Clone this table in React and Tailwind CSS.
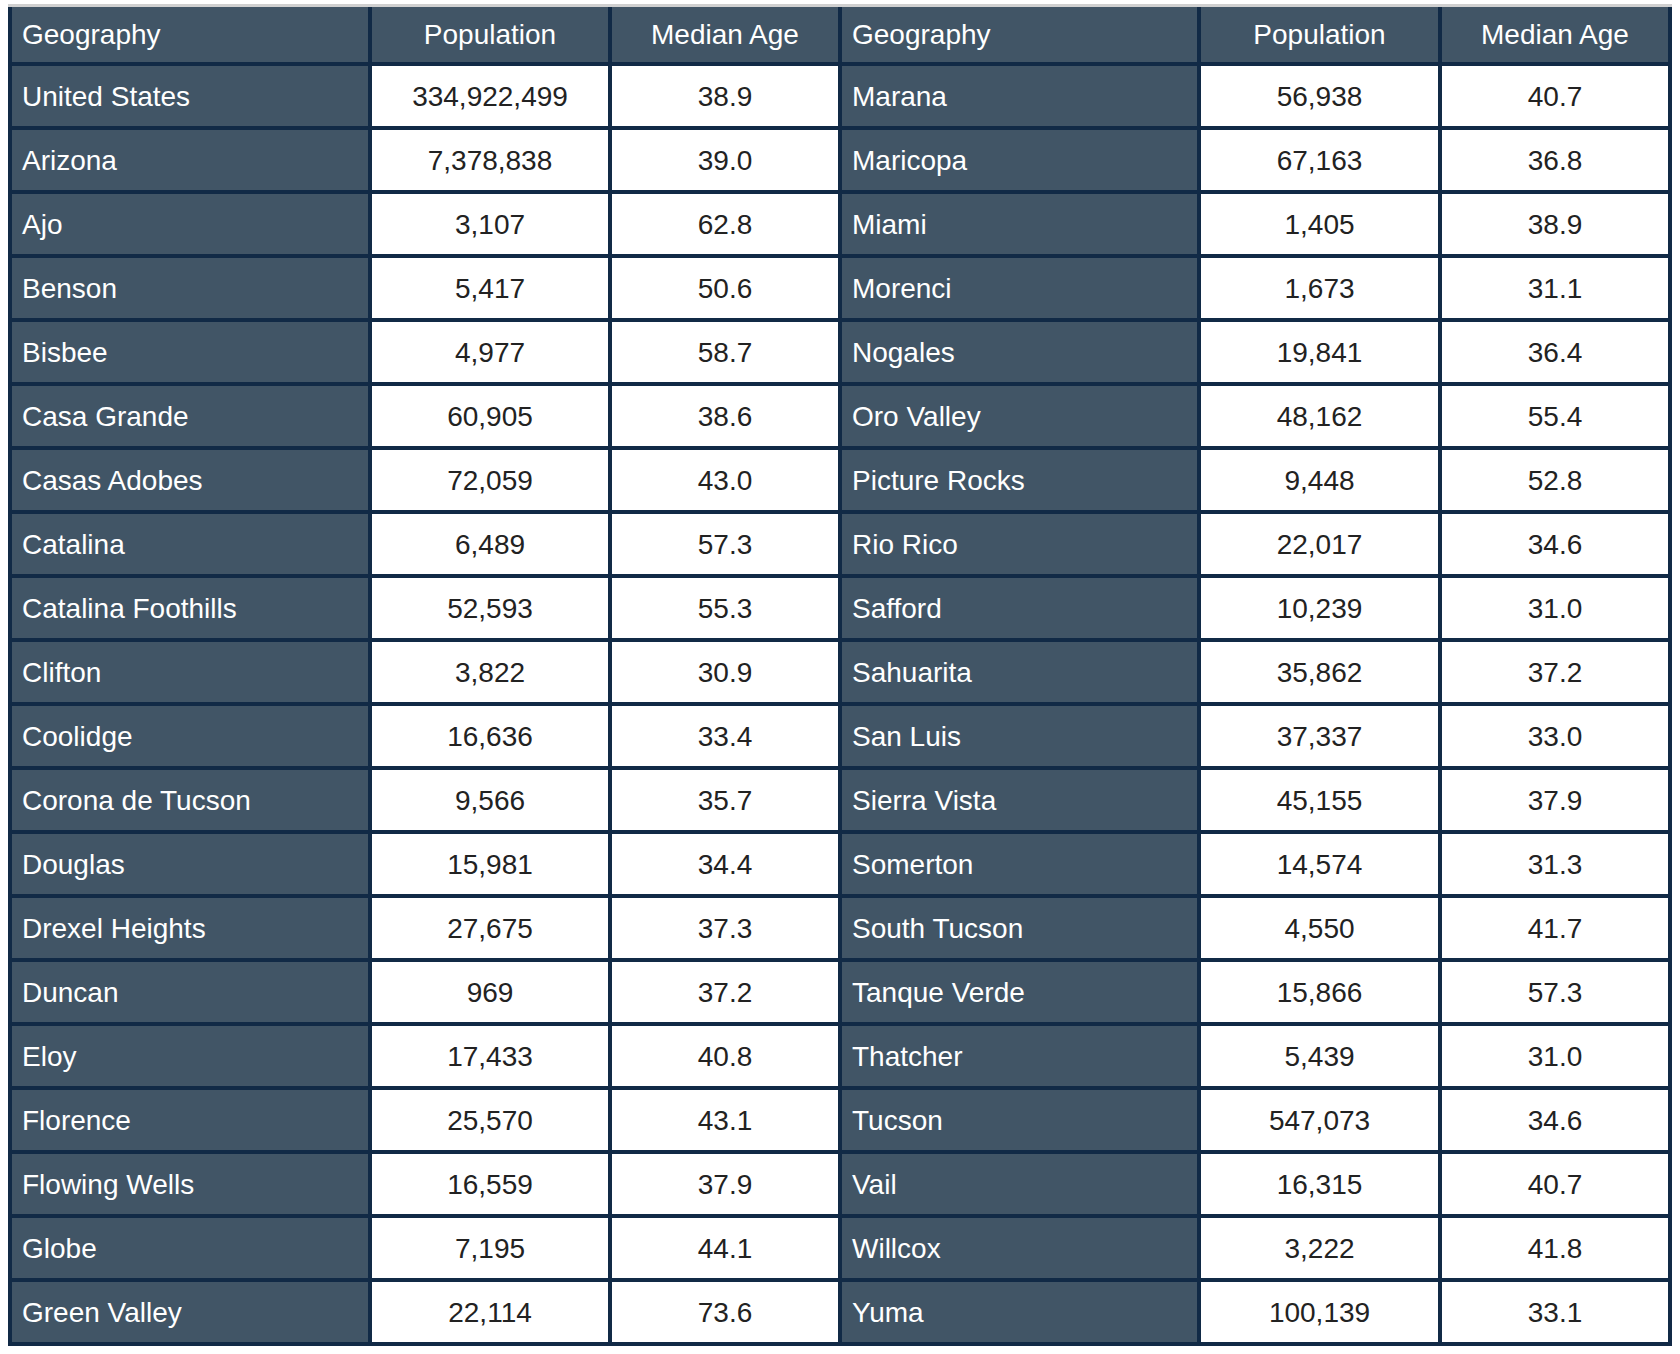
import React from "react";

const left = [
  ["United States", "334,922,499", "38.9"],
  ["Arizona", "7,378,838", "39.0"],
  ["Ajo", "3,107", "62.8"],
  ["Benson", "5,417", "50.6"],
  ["Bisbee", "4,977", "58.7"],
  ["Casa Grande", "60,905", "38.6"],
  ["Casas Adobes", "72,059", "43.0"],
  ["Catalina", "6,489", "57.3"],
  ["Catalina Foothills", "52,593", "55.3"],
  ["Clifton", "3,822", "30.9"],
  ["Coolidge", "16,636", "33.4"],
  ["Corona de Tucson", "9,566", "35.7"],
  ["Douglas", "15,981", "34.4"],
  ["Drexel Heights", "27,675", "37.3"],
  ["Duncan", "969", "37.2"],
  ["Eloy", "17,433", "40.8"],
  ["Florence", "25,570", "43.1"],
  ["Flowing Wells", "16,559", "37.9"],
  ["Globe", "7,195", "44.1"],
  ["Green Valley", "22,114", "73.6"],
];

const right = [
  ["Marana", "56,938", "40.7"],
  ["Maricopa", "67,163", "36.8"],
  ["Miami", "1,405", "38.9"],
  ["Morenci", "1,673", "31.1"],
  ["Nogales", "19,841", "36.4"],
  ["Oro Valley", "48,162", "55.4"],
  ["Picture Rocks", "9,448", "52.8"],
  ["Rio Rico", "22,017", "34.6"],
  ["Safford", "10,239", "31.0"],
  ["Sahuarita", "35,862", "37.2"],
  ["San Luis", "37,337", "33.0"],
  ["Sierra Vista", "45,155", "37.9"],
  ["Somerton", "14,574", "31.3"],
  ["South Tucson", "4,550", "41.7"],
  ["Tanque Verde", "15,866", "57.3"],
  ["Thatcher", "5,439", "31.0"],
  ["Tucson", "547,073", "34.6"],
  ["Vail", "16,315", "40.7"],
  ["Willcox", "3,222", "41.8"],
  ["Yuma", "100,139", "33.1"],
];

function HeadLeft({ children }) {
  return (
    <div className="bg-[#415566] text-white h-[55px] flex items-center pl-[10px] pt-[1px]">{children}</div>
  );
}
function HeadCenter({ children }) {
  return (
    <div className="bg-[#415566] text-white h-[55px] flex items-center justify-center pt-[1px]">{children}</div>
  );
}
function Geo({ children }) {
  return (
    <div className="bg-[#415566] text-white h-[60px] flex items-center pl-[10px] pt-[2px] whitespace-nowrap">{children}</div>
  );
}
function Num({ children }) {
  return (
    <div className="bg-white text-[#222222] h-[60px] flex items-center justify-center pt-[2px]">{children}</div>
  );
}

export default function App() {
  const rows = left.map((l, i) => [l, right[i]]);
  return (
    <div className="bg-white min-h-[1354px] pt-[4px] pl-[8px]" style={{ fontFamily: '"Liberation Sans", Arial, sans-serif' }}>
      <div className="w-[1664px] h-[3px] bg-[#d0d0d0]" />
      <div className="w-[1664px] bg-[#112a46] px-[4px] pb-[4px] grid grid-cols-[356px_236px_226px_355px_237px_226px] gap-[4px] text-[28px] leading-none">
        <HeadLeft>Geography</HeadLeft>
        <HeadCenter>Population</HeadCenter>
        <HeadCenter>Median Age</HeadCenter>
        <HeadLeft>Geography</HeadLeft>
        <HeadCenter>Population</HeadCenter>
        <HeadCenter>Median Age</HeadCenter>
        {rows.map(([l, r], i) => (
          <React.Fragment key={i}>
            <Geo>{l[0]}</Geo>
            <Num>{l[1]}</Num>
            <Num>{l[2]}</Num>
            <Geo>{r[0]}</Geo>
            <Num>{r[1]}</Num>
            <Num>{r[2]}</Num>
          </React.Fragment>
        ))}
      </div>
    </div>
  );
}
